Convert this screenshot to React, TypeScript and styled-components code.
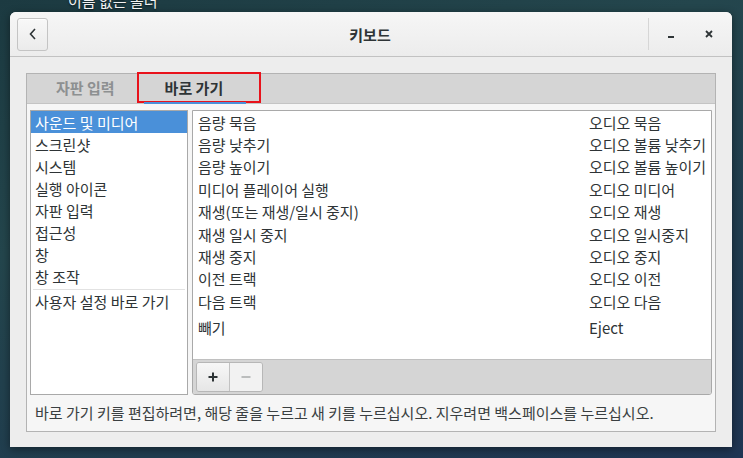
import React from "react";
import styled, {createGlobalStyle, css} from "styled-components";

const GlobalStyle = createGlobalStyle`
	html, body {
		margin: 0;
		padding: 0;
	}
	body {
		font-family: "Noto Sans CJK KR", "Noto Sans", sans-serif;
		font-size: 15px;
		color: #2e3436;
		overflow: hidden;
	}
`;

const Desktop = styled.div`
	position: relative;
	width: 743px;
	height: 458px;
	padding: 12px 0 0 10px;
	box-sizing: border-box;
	overflow: hidden;
	background: linear-gradient(160deg, #1c3a41 0%, #24464d 35%, #203c4f 70%, #1f3553 100%);
`;

const DesktopLabel = styled.div`
	position: absolute;
	left: 68px;
	top: -10px;
	color: #f2f2f2;
	font-size: 15px;
	text-shadow: 0 1px 2px rgba(0, 0, 0, 0.6);
`;

const Window = styled.div`
	width: 722px;
	height: 435px;
	display: flex;
	flex-direction: column;
	background: #ededed;
	border-radius: 6px 6px 0 0;
	box-shadow: 0 2px 8px rgba(0, 0, 0, 0.45);
	overflow: hidden;
`;

const HeaderBar = styled.div`
	height: 44px;
	flex-shrink: 0;
	display: grid;
	grid-template-columns: 1fr auto 1fr;
	align-items: center;
	padding: 0 9px 0 7px;
	background: linear-gradient(#f6f6f6, #ececec);
	border-bottom: 1px solid #c2c2c2;
`;

const BackButton = styled.button`
	justify-self: start;
	width: 31px;
	height: 33px;
	padding: 0;
	display: flex;
	align-items: center;
	justify-content: center;
	border: 1px solid #c4c4c4;
	border-radius: 3px;
	background: linear-gradient(#f8f8f8, #ebebeb);
	box-shadow: inset 0 1px rgba(255, 255, 255, 0.8);
`;

const Title = styled.div`
	font-weight: 700;
	font-size: 15px;
	color: #2e3436;
`;

const WindowControls = styled.div`
	justify-self: end;
	display: flex;
	align-items: center;
	height: 100%;
`;

const Separator = styled.div`
	width: 1px;
	height: 32px;
	background: #d6d6d6;
	margin-right: 8px;
`;

const ControlButton = styled.div`
	width: 28px;
	height: 28px;
	display: flex;
	align-items: center;
	justify-content: center;
	& + & {
		margin-left: 10px;
	}
`;

const Content = styled.div`
	flex: 1;
	padding: 16px 16px 15px;
`;

const Notebook = styled.div`
	height: 359px;
	box-sizing: border-box;
	border: 1px solid #b3b3b3;
	display: flex;
	flex-direction: column;
	background: #f6f6f6;
`;

const TabBar = styled.div`
	height: 30px;
	flex-shrink: 0;
	box-sizing: border-box;
	display: flex;
	padding-left: 4px;
	background: #d5d5d5;
	border-bottom: 1px solid #c4c4c4;
`;

interface TabProps {
	active?: boolean;
}

const Tab = styled.div<TabProps>`
	position: relative;
	display: flex;
	align-items: center;
	padding: 0 25px 2px;
	font-weight: 700;
	font-size: 15px;
	color: ${({active}) => (active ? "#2e3436" : "#8d9091")};
	${({active}) =>
		active &&
		css`
			&::after {
				content: "";
				position: absolute;
				left: 4px;
				right: 2px;
				bottom: -1px;
				height: 2px;
				background: #4a90d9;
			}
		`};
`;

const Highlight = styled.div`
	position: absolute;
	left: -3px;
	right: -13px;
	top: -2px;
	bottom: 0;
	border: 2px solid #e8121b;
	pointer-events: none;
`;

const Page = styled.div`
	flex: 1;
	display: flex;
	flex-direction: column;
	padding: 6px 3px 0;
`;

const Panes = styled.div`
	height: 285px;
	display: flex;
	gap: 4px;
`;

const SectionList = styled.div`
	width: 158px;
	box-sizing: border-box;
	border: 1px solid #a9a9a9;
	background: #fff;
	display: flex;
	flex-direction: column;
`;

interface SectionRowProps {
	selected?: boolean;
	divided?: boolean;
}

const SectionRow = styled.div<SectionRowProps>`
	height: 22px;
	display: flex;
	align-items: center;
	padding-left: 4px;
	white-space: nowrap;
	background: ${({selected}) => (selected ? "#4a90d9" : "transparent")};
	color: ${({selected}) => (selected ? "#fff" : "#2e3436")};
	${({divided}) =>
		divided &&
		css`
			margin: 2px 2px 0;
			padding-left: 2px;
			border-top: 1px solid #e2e2e2;
		`};
`;

const ShortcutPanel = styled.div`
	width: 520px;
	box-sizing: border-box;
	border: 1px solid #a9a9a9;
	border-radius: 0 0 3px 3px;
	display: flex;
	flex-direction: column;
	overflow: hidden;
`;

const ShortcutList = styled.div`
	height: 248px;
	background: #fff;
`;

interface ShortcutRowProps {
	tall?: boolean;
}

const ShortcutRow = styled.div<ShortcutRowProps>`
	height: ${({tall}) => (tall ? "27px" : "22.4px")};
	padding-top: ${({tall}) => (tall ? "3px" : "0")};
	box-sizing: border-box;
	display: grid;
	grid-template-columns: 391px 1fr;
	align-items: center;
	padding-left: 5px;
	color: #2e3436;
	white-space: nowrap;
`;

const Toolbar = styled.div`
	flex: 1;
	display: flex;
	align-items: center;
	padding: 0 3px;
	background: #d5d5d5;
	border-top: 1px solid #c0c0c0;
`;

const ButtonGroup = styled.div`
	display: flex;
	height: 28px;
	border: 1px solid #b7b7b7;
	border-radius: 3px;
	overflow: hidden;
`;

interface ToolButtonProps {
	disabled?: boolean;
}

const ToolButton = styled.div<ToolButtonProps>`
	width: 32px;
	display: flex;
	align-items: center;
	justify-content: center;
	background: ${({disabled}) =>
		disabled ? "#f2f2f2" : "linear-gradient(#f7f7f7, #e6e6e6)"};
	& + & {
		border-left: 1px solid #c2c2c2;
	}
`;

const HelpText = styled.div`
	flex: 1;
	display: flex;
	align-items: center;
	padding: 0 0 1px 5px;
	color: #3a3f41;
	white-space: nowrap;
`;

const sections = [
	"사운드 및 미디어",
	"스크린샷",
	"시스템",
	"실행 아이콘",
	"자판 입력",
	"접근성",
	"창",
	"창 조작"
];

const shortcuts: [string, string][] = [
	["음량 묵음", "오디오 묵음"],
	["음량 낮추기", "오디오 볼륨 낮추기"],
	["음량 높이기", "오디오 볼륨 높이기"],
	["미디어 플레이어 실행", "오디오 미디어"],
	["재생(또는 재생/일시 중지)", "오디오 재생"],
	["재생 일시 중지", "오디오 일시중지"],
	["재생 중지", "오디오 중지"],
	["이전 트랙", "오디오 이전"],
	["다음 트랙", "오디오 다음"],
	["빼기", "Eject"]
];

const Glyph = ({d, color = "#2e3436", width = 2}: {d: string; color?: string; width?: number}) => (
	<svg width="12" height="12" viewBox="0 0 12 12">
		<path d={d} fill="none" stroke={color} strokeWidth={width} />
	</svg>
);

export default function App() {
	return (
		<>
			<GlobalStyle />
			<Desktop>
				<DesktopLabel>이름 없는 폴더</DesktopLabel>
				<Window>
					<HeaderBar>
						<BackButton>
							<svg width="10" height="14" viewBox="0 0 10 14">
								<path d="M7 2 L2.5 7 L7 12" fill="none" stroke="#2e3436" strokeWidth="1.6" />
							</svg>
						</BackButton>
						<Title>키보드</Title>
						<WindowControls>
							<Separator />
							<ControlButton>
								<Glyph d="M3 9 H9" />
							</ControlButton>
							<ControlButton>
								<Glyph d="M3 3 L9 9 M9 3 L3 9" width={1.8} />
							</ControlButton>
						</WindowControls>
					</HeaderBar>
					<Content>
						<Notebook>
							<TabBar>
								<Tab>자판 입력</Tab>
								<Tab active>
									바로 가기
									<Highlight />
								</Tab>
							</TabBar>
							<Page>
								<Panes>
									<SectionList>
										{sections.map((s, i) => (
											<SectionRow key={s} selected={i === 0}>
												{s}
											</SectionRow>
										))}
										<SectionRow divided>사용자 설정 바로 가기</SectionRow>
									</SectionList>
									<ShortcutPanel>
										<ShortcutList>
											{shortcuts.map(([name, accel], i) => (
												<ShortcutRow key={name} tall={i === shortcuts.length - 1}>
													<span>{name}</span>
													<span>{accel}</span>
												</ShortcutRow>
											))}
										</ShortcutList>
										<Toolbar>
											<ButtonGroup>
												<ToolButton>
													<Glyph d="M6 1.5 V10.5 M1.5 6 H10.5" />
												</ToolButton>
												<ToolButton disabled>
													<Glyph d="M1.5 6 H10.5" color="#a8abab" width={1.4} />
												</ToolButton>
											</ButtonGroup>
										</Toolbar>
									</ShortcutPanel>
								</Panes>
								<HelpText>
									바로 가기 키를 편집하려면, 해당 줄을 누르고 새 키를 누르십시오. 지우려면 백스페이스를 누르십시오.
								</HelpText>
							</Page>
						</Notebook>
					</Content>
				</Window>
			</Desktop>
		</>
	);
}
